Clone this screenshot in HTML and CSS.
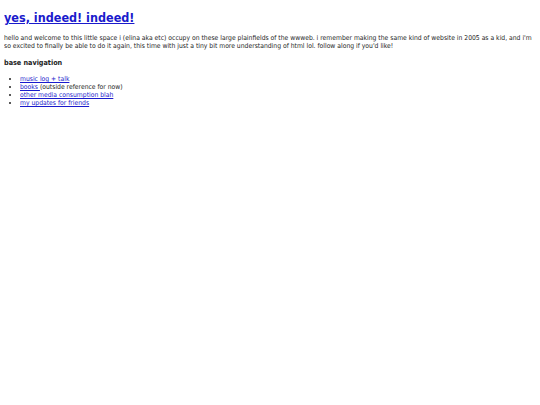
FILE: index.html
```html
<!DOCTYPE html>
<html lang="en">
<head>
  <meta charset="UTF-8" />
  <title>yes, indeed! indeed!</title>
  <link rel="stylesheet" href="styles.css">
</head>
<body>
  <h1><a href="#">yes, indeed! indeed!</a></h1>

  <p>hello and welcome to this little space i (elina aka etc) occupy on these large plainfields of the wwweb. i remember making the same kind of website in 2005 as a kid, and i'm so excited to finally be able to do it again, this time with just a tiny bit more understanding of html lol. follow along if you'd like!</p>

  <h3>base navigation</h3>
  <ul>
    <li><a href="#">music log + talk</a></li>
    <li><a href="#">books </a>(outside reference for now)</li>
    <li><a href="#">other media consumption blah</a></li>
    <li><a href="#">my updates for friends</a></li>
  </ul>
</body>
</html>
```

FILE: styles.css
```css
body {
  margin: 4px;
  font-family: "DejaVu Sans Condensed", "DejaVu Sans", sans-serif;
  font-size: 6.75px;
  line-height: 8px;
  color: #222;
}

a {
  color: #1a1acc;
}

h1 {
  font-size: 12.5px;
  line-height: 16px;
  margin: 6px 0 8px;
}

p {
  margin: 0 0 8px;
}

h3 {
  font-size: 7.2px;
  line-height: 10px;
  margin: 1px 0 7px;
}

ul {
  margin: 0;
  padding-left: 16px;
}
```
